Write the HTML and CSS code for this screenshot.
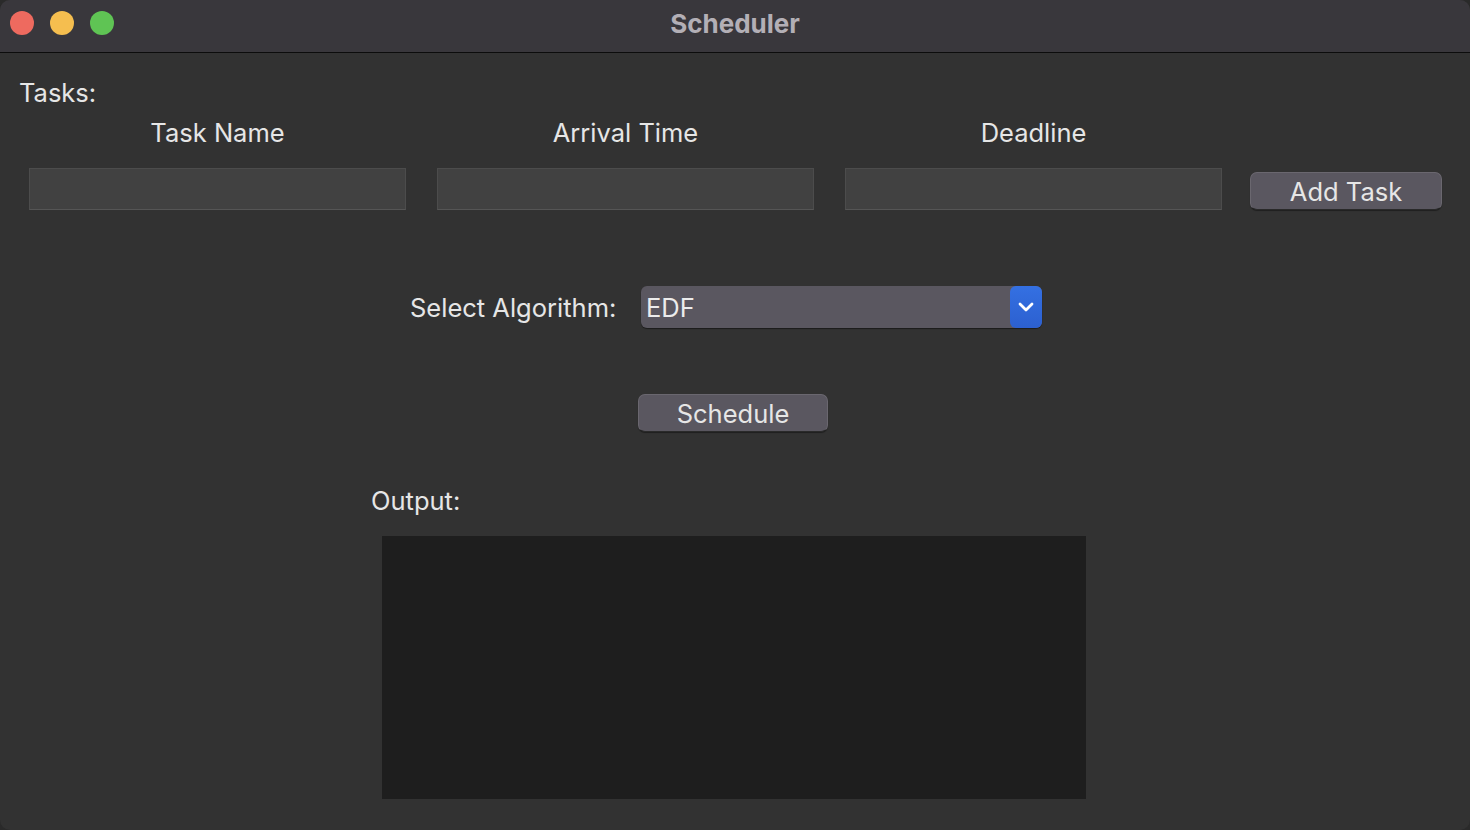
FILE: index.html
```html
<!DOCTYPE html>
<html>
<head>
<meta charset="utf-8">
<link rel="stylesheet" href="styles.css">
</head>
<body>
<div class="window">
  <div class="titlebar">
    <div class="lights">
      <span class="light red"></span>
      <span class="light yellow"></span>
      <span class="light green"></span>
    </div>
    <div class="title">Scheduler</div>
  </div>
  <div class="content">
    <div class="tasks-label">Tasks:</div>
    <div class="task-grid">
      <div class="col-label">Task Name</div>
      <div class="col-label">Arrival Time</div>
      <div class="col-label">Deadline</div>
      <div></div>
      <div class="field"></div>
      <div class="field"></div>
      <div class="field"></div>
      <button class="btn add-btn">Add Task</button>
    </div>
    <div class="algo-row">
      <span class="algo-label">Select Algorithm:</span>
      <div class="select">
        <span class="select-value">EDF</span>
        <span class="select-arrow">
          <svg width="18" height="12" viewBox="0 0 18 12"><path d="M3 3 L9 9 L15 3" fill="none" stroke="#fff" stroke-width="2.8" stroke-linecap="round" stroke-linejoin="round"/></svg>
        </span>
      </div>
    </div>
    <div class="schedule-row">
      <button class="btn schedule-btn">Schedule</button>
    </div>
    <div class="output-section">
      <div class="output-label">Output:</div>
      <div class="output-box"></div>
    </div>
  </div>
</div>
</body>
</html>
```
FILE: styles.css
```css
html, body {
  margin: 0;
  padding: 0;
  background: #2a2a2a;
}
body {
  width: 1470px;
  height: 830px;
  overflow: hidden;
  font-family: Inter, "Noto Sans", "Liberation Sans", sans-serif;
  color: #e6e6e6;
}
.window {
  width: 1470px;
  height: 830px;
  display: flex;
  flex-direction: column;
  background: #323232;
  border-radius: 10px;
  overflow: hidden;
}
.titlebar {
  height: 52px;
  flex: none;
  background: #39373c;
  border-bottom: 1px solid #0c0c0c;
  display: flex;
  align-items: flex-start;
  position: relative;
}
.lights {
  display: flex;
  gap: 16px;
  padding-left: 10px;
  padding-top: 11px;
}
.light {
  width: 24px;
  height: 24px;
  border-radius: 50%;
  display: block;
}
.red { background: #ee6a5f; }
.yellow { background: #f5be4f; }
.green { background: #5fc454; }
.title {
  position: absolute;
  left: 0;
  right: 0;
  top: 0;
  height: 46px;
  display: flex;
  align-items: center;
  justify-content: center;
  font-weight: 700;
  font-size: 26px;
  color: #b3afb6;
}
.content {
  flex: 1;
  padding: 0 0 0 19px;
  display: flex;
  flex-direction: column;
}
.tasks-label {
  font-size: 25.5px;
  margin-top: 25px;
  height: 30px;
  line-height: 30px;
}
.task-grid {
  display: grid;
  grid-template-columns: 377px 377px 377px 192px;
  column-gap: 31px;
  margin-left: 10px;
  align-items: end;
}
.col-label {
  text-align: center;
  font-size: 25.5px;
  height: 30px;
  line-height: 30px;
  margin-top: 10px;
  margin-bottom: 20px;
}
.field {
  height: 42px;
  box-sizing: border-box;
  background: #414141;
  border: 1px solid #4c4c4c;
  border-bottom-color: #555;
}
.btn {
  font-family: inherit;
  font-size: 25.5px;
  color: #e6e6e6;
  background: #5a5760;
  border: 1px solid #6a676f;
  border-bottom-color: #2a2a2a;
  border-radius: 7px;
  box-shadow: 0 1px 1px rgba(0,0,0,0.4);
  padding: 0;
  height: 38px;
  box-sizing: border-box;
}
.add-btn {
  margin-left: -3px;
  width: 192px;
}
.algo-row {
  display: flex;
  align-items: center;
  margin-top: 76px;
  padding-left: 391px;
  height: 42px;
}
.algo-label {
  font-size: 25.5px;
  width: 231px;
}
.select {
  width: 401px;
  height: 42px;
  box-sizing: border-box;
  background: #5a5760;
  border-radius: 6px;
  display: flex;
  align-items: center;
  box-shadow: 0 1px 1px rgba(0,0,0,0.45);
}
.select-value {
  flex: 1;
  font-size: 25.5px;
  padding-left: 5px;
  color: #ececec;
}
.select-arrow {
  width: 32px;
  height: 42px;
  background: linear-gradient(#3470e2, #2c60d0);
  border-radius: 6px;
  display: flex;
  align-items: center;
  justify-content: center;
}
.schedule-row {
  display: flex;
  margin-top: 66px;
  padding-left: 619px;
}
.schedule-btn {
  width: 190px;
}
.output-section {
  margin-top: 54px;
  padding-left: 352px;
}
.output-label {
  font-size: 25.5px;
  height: 30px;
  line-height: 30px;
}
.output-box {
  margin-top: 20px;
  margin-left: 11px;
  width: 704px;
  height: 263px;
  background: #1e1e1e;
}
```
